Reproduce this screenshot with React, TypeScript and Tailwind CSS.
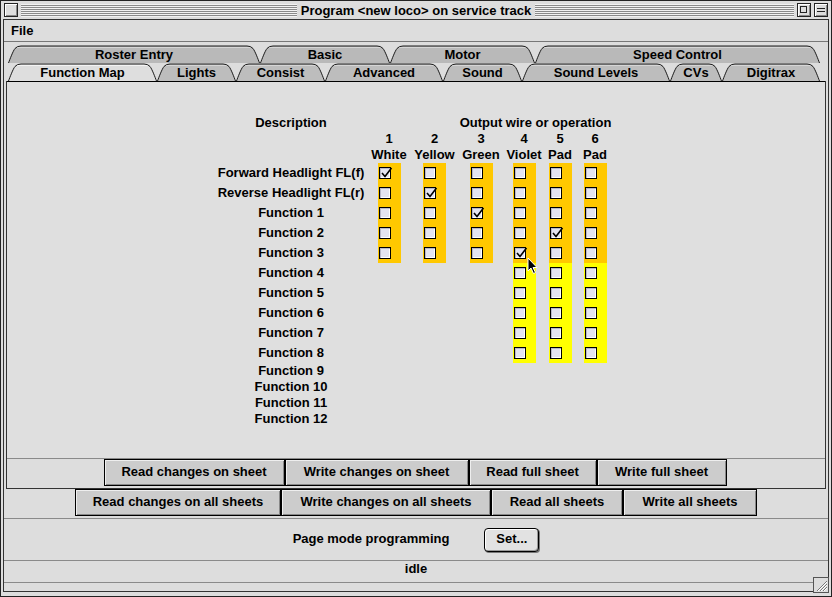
import React from "react";

const backTabs = [
  { label: "Roster Entry", w: 252 },
  { label: "Basic", w: 130 },
  { label: "Motor", w: 145 },
  { label: "Speed Control", w: 285 },
];

const frontTabs = [
  { label: "Function Map", w: 149, active: true },
  { label: "Lights", w: 79 },
  { label: "Consist", w: 89 },
  { label: "Advanced", w: 118 },
  { label: "Sound", w: 79 },
  { label: "Sound Levels", w: 148 },
  { label: "CVs", w: 52 },
  { label: "Digitrax", w: 98 },
];

const cols = [
  { n: "1", name: "White" },
  { n: "2", name: "Yellow" },
  { n: "3", name: "Green" },
  { n: "4", name: "Violet" },
  { n: "5", name: "Pad" },
  { n: "6", name: "Pad" },
];

const rows = [
  "Forward Headlight FL(f)",
  "Reverse Headlight FL(r)",
  "Function 1",
  "Function 2",
  "Function 3",
  "Function 4",
  "Function 5",
  "Function 6",
  "Function 7",
  "Function 8",
];

const extraRows = ["Function 9", "Function 10", "Function 11", "Function 12"];

// row index -> checked column
const checked: Record<number, number> = { 0: 0, 1: 1, 2: 2, 3: 4, 4: 3 };

function Tab({ label, w, active, back }: { label: string; w: number; active?: boolean; back?: boolean }) {
  const h = 18;
  const edge = `M0.5,${h} C2,${h - 4} 5,6 7,3.5 Q9,1 13,1 L${w - 13},1 Q${w - 9},1 ${w - 7},3.5 C${w - 5},6 ${w - 2},${h - 4} ${w - 0.5},${h}`;
  const fill = active ? "#dedede" : back ? "#b9b9b9" : "#bdbdbd";
  return (
    <div className="relative flex items-center justify-center h-[18px] shrink-0" style={{ width: w }}>
      <svg className="absolute inset-0" width={w} height={h} viewBox={`0 0 ${w} ${h}`}>
        <path d={edge + " Z"} fill={fill} />
        <path d={`M9,2.5 L${w - 10},2.5`} stroke={active ? "#f4f4f4" : "#d6d6d6"} strokeWidth="1" />
        <path d={edge} fill="none" stroke="#1a1a1a" strokeWidth="1" />
      </svg>
      <span className="relative text-[13px] font-bold text-black leading-none">{label}</span>
    </div>
  );
}

function CheckBox({ on }: { on: boolean }) {
  return (
    <div className="relative w-[12px] h-[12px] border border-black bg-[#e4e4f0] shadow-[inset_1px_1px_0_#b8b8c8,inset_-1px_-1px_0_#ffffff]">
      {on && (
        <svg className="absolute -left-[1px] -top-[2px]" width="14" height="14" viewBox="0 0 14 14">
          <path d="M3,7 L6,10.5 L12.5,2" fill="none" stroke="#000" strokeWidth="1.6" />
        </svg>
      )}
    </div>
  );
}

function Btn({ label, w }: { label: string; w: number }) {
  return (
    <div
      className="h-[27px] border border-black bg-[#cccccc] shadow-[inset_1px_1px_0_#eeeeee,inset_-1px_-1px_0_#888888] flex items-center justify-center pb-[1px] text-[13px] font-bold"
      style={{ width: w }}
    >
      {label}
    </div>
  );
}

function Stripes() {
  return (
    <div className="flex-1 h-[13px] bg-[repeating-linear-gradient(to_bottom,#f2f2f2_0px,#f2f2f2_1px,#8a8a8a_1px,#8a8a8a_2px)]" />
  );
}

function SmallBox({ children }: { children?: React.ReactNode }) {
  return (
    <div className="w-[14px] h-[14px] border border-[#222] bg-[#dddddd] shadow-[inset_1px_1px_0_#ffffff,inset_-1px_-1px_0_#888888] relative shrink-0">
      {children}
    </div>
  );
}

export default function App() {
  return (
    <div className="relative w-[832px] h-[597px] bg-[#dddddd] border border-[#222] flex flex-col overflow-hidden font-['Liberation_Sans',Arial,sans-serif] text-black select-none">
      {/* title bar */}
      <div className="h-[18px] grid grid-cols-[1fr_auto_1fr] items-center px-[3px] shrink-0">
        <div className="flex items-center gap-[3px]">
          <SmallBox />
          <Stripes />
        </div>
        <div className="px-[4px] text-[13px] font-bold leading-none">Program &lt;new loco&gt; on service track</div>
        <div className="flex items-center gap-[3px]">
          <Stripes />
          <SmallBox>
            <div className="absolute left-[2px] top-[2px] w-[7px] h-[7px] border border-[#222]" />
          </SmallBox>
          <SmallBox>
            <div className="absolute left-[2px] top-[4px] w-[8px] h-[4px] border-y border-[#222]" />
          </SmallBox>
        </div>
      </div>

      {/* window body */}
      <div className="flex-1 flex flex-col mx-[2px] mb-[4px] border border-[#333] bg-[#dddddd]">
        {/* menu */}
        <div className="h-[22px] border-b border-[#777] flex items-center pl-[7px] shrink-0">
          <span className="text-[13px] font-bold">File</span>
        </div>

        {/* tabs */}
        <div className="pt-[3px] pl-[4px] flex flex-col shrink-0">
          <div className="flex">
            {backTabs.map((t) => (
              <Tab key={t.label} label={t.label} w={t.w} back />
            ))}
          </div>
          <div className="flex">
            {frontTabs.map((t) => (
              <Tab key={t.label} label={t.label} w={t.w} active={t.active} />
            ))}
          </div>
        </div>

        {/* tabbed pane */}
        <div className="mx-[2px] border-x border-b border-[#333] shrink-0">
          <div className="h-[378px] border-t border-black border-b border-b-[#8a8a8a] bg-[#dfdfdf] pt-[33px] flex justify-center pr-[3px]">
            <div className="grid grid-cols-[151px_45px_46px_47px_39px_33px_37px] auto-rows-min text-[13px] font-bold leading-none">
              <div className="h-[16px] flex items-center justify-center pb-[2px]">Description</div>
              <div className="col-span-2" />
              <div className="col-span-4 h-[16px] flex items-center justify-center pb-[2px]">Output wire or operation</div>

              <div />
              {cols.map((c, i) => (
                <div key={"n" + i} className="h-[16px] flex items-center justify-center pb-[2px]">{c.n}</div>
              ))}
              <div />
              {cols.map((c, i) => (
                <div key={"c" + i} className="h-[16px] flex items-center justify-center pb-[2px]">{c.name}</div>
              ))}

              {rows.map((r, ri) => (
                <React.Fragment key={r}>
                  <div className="h-[20px] flex items-center justify-center whitespace-nowrap pb-[2px]">{r}</div>
                  {cols.map((_, ci) => {
                    const show = ri < 5 || ci >= 3;
                    const bg = ri < 5 ? "bg-[#ffc800]" : "bg-[#ffff00]";
                    return (
                      <div key={ci} className="h-[20px] flex justify-center">
                        {show && (
                          <div className={`w-[23px] h-[20px] ${bg} flex items-center pl-[1px]`}>
                            <CheckBox on={checked[ri] === ci} />
                          </div>
                        )}
                      </div>
                    );
                  })}
                </React.Fragment>
              ))}

              {extraRows.map((r) => (
                <React.Fragment key={r}>
                  <div className="h-[16px] flex items-center justify-center pb-[2px]">{r}</div>
                  <div className="col-span-6" />
                </React.Fragment>
              ))}
            </div>
          </div>
          <div className="h-[29px] flex items-start justify-center pr-[2px]">
            <Btn label="Read changes on sheet" w={181} />
            <Btn label="Write changes on sheet" w={184} />
            <Btn label="Read full sheet" w={128} />
            <Btn label="Write full sheet" w={130} />
          </div>
        </div>

        <div className="h-[30px] border-b border-[#8a8a8a] flex items-start justify-center shrink-0">
          <Btn label="Read changes on all sheets" w={206} />
          <Btn label="Write changes on all sheets" w={210} />
          <Btn label="Read all sheets" w={132} />
          <Btn label="Write all sheets" w={134} />
        </div>

        <div className="h-[42px] border-b border-[#8a8a8a] flex items-center justify-center gap-[35px] shrink-0">
          <span className="text-[13px] font-bold pb-[2px]">Page mode programming</span>
          <div className="w-[55px] h-[24px] rounded-[4px] border border-black bg-[#e2e2e2] shadow-[inset_1px_1px_0_#ffffff,inset_-1px_-1px_0_#999999,1px_1px_0_#777777] flex items-center justify-center pb-[1px] text-[13px] font-bold">
            Set...
          </div>
        </div>

        <div className="h-[22px] border-b border-[#8a8a8a] flex items-center justify-center pb-[6px] shrink-0">
          <span className="text-[13px] font-bold leading-none">idle</span>
        </div>
        <div className="flex-1" />
      </div>

      {/* resize grip */}
      <svg className="absolute right-[2px] bottom-[3px]" width="16" height="16" viewBox="0 0 16 16">
        <rect x="0.5" y="0.5" width="15" height="15" fill="#dddddd" stroke="#555" />
        <path d="M4,14 L14,4 M7,14 L14,7 M10,14 L14,10" stroke="#777" strokeWidth="1" />
        <path d="M5,14 L14,5 M8,14 L14,8 M11,14 L14,11" stroke="#fff" strokeWidth="1" />
      </svg>

      {/* mouse pointer */}
      <svg className="absolute left-[526px] top-[256px]" width="12" height="18" viewBox="0 0 12 18">
        <path d="M1,1 L1,14 L4,11 L6.5,16.5 L8.5,15.5 L6,10.5 L10,10.5 Z" fill="#000" stroke="#fff" strokeWidth="1" />
      </svg>
    </div>
  );
}
